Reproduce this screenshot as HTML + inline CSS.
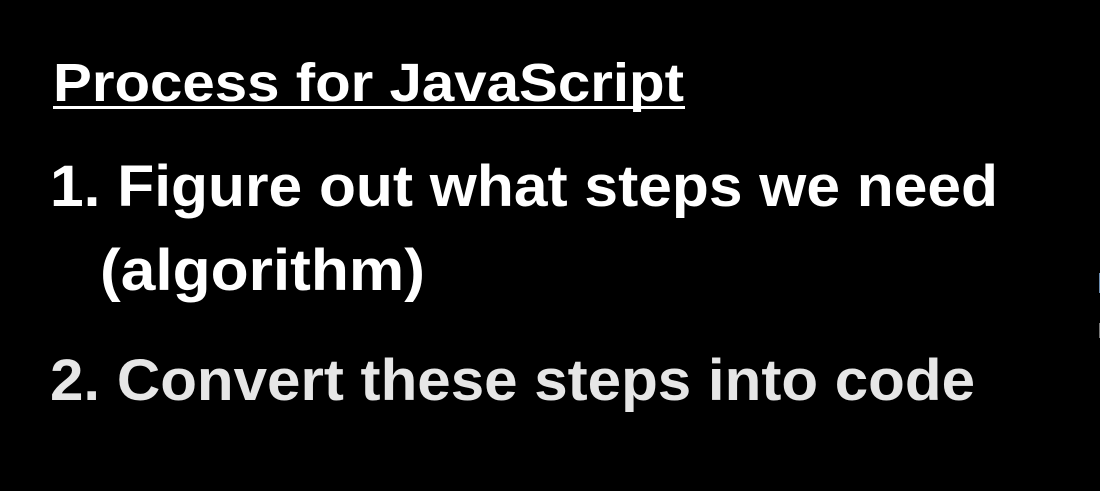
<!DOCTYPE html>
<html><head><style>html,body{margin:0;padding:0;background:#000;width:1100px;height:491px;overflow:hidden}</style></head>
<body>
<svg width="1100" height="491" xmlns="http://www.w3.org/2000/svg" style="display:block">
<rect width="1100" height="491" fill="#000"/>
<g font-family="Liberation Sans, sans-serif" font-weight="bold" fill="#fff">
<text x="53" y="101" font-size="54" textLength="631" lengthAdjust="spacingAndGlyphs">Process for JavaScript</text>
<rect x="53" y="106" width="632" height="3" fill="#fff"/>
<text x="50" y="206" font-size="58" textLength="948" lengthAdjust="spacingAndGlyphs">1. Figure out what steps we need</text>
<text x="100" y="290" font-size="58" textLength="325" lengthAdjust="spacingAndGlyphs">(algorithm)</text>
<text x="50" y="400" font-size="58" fill="#e6e6e6" textLength="925" lengthAdjust="spacingAndGlyphs">2. Convert these steps into code</text>
</g>
<rect x="1099" y="273" width="1" height="20" fill="#6a8cb0"/>
<rect x="1099" y="323" width="1" height="15" fill="#777"/>
</svg>
</body></html>
